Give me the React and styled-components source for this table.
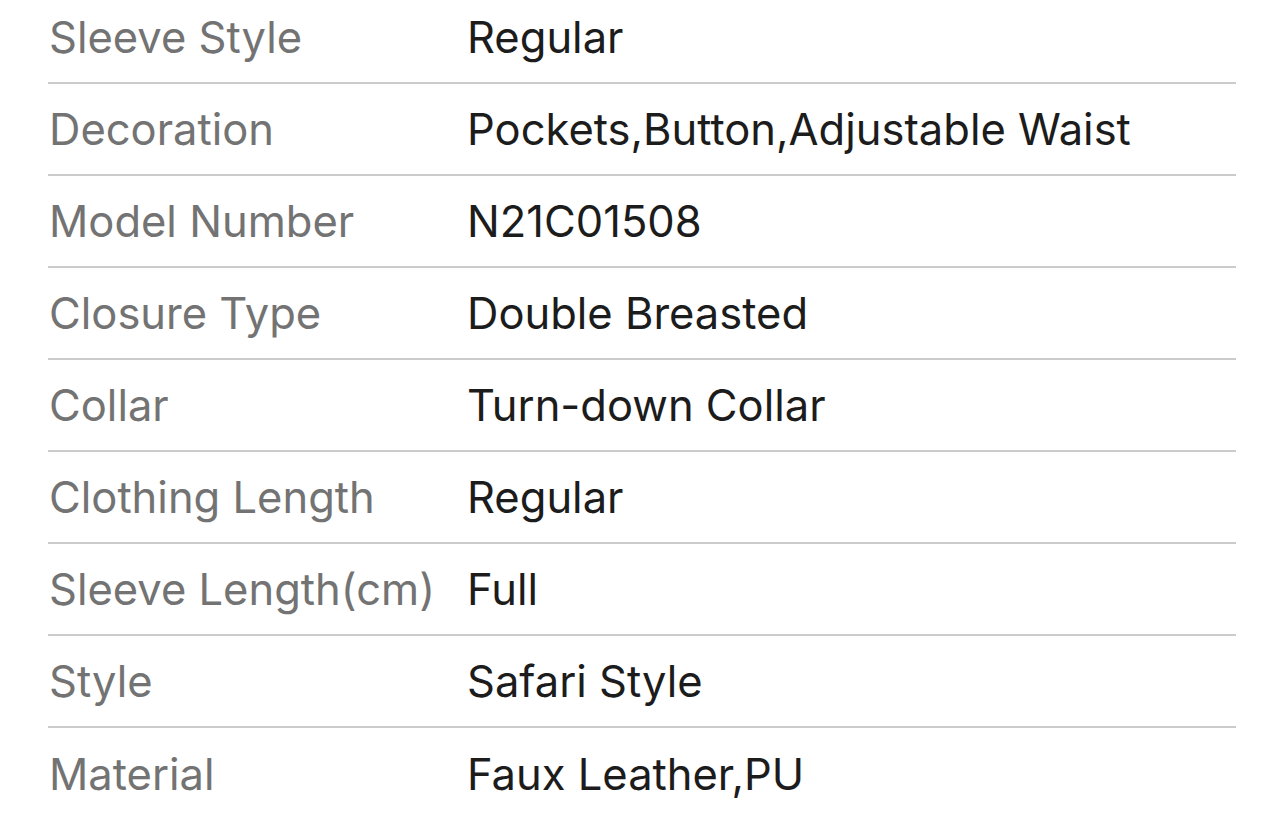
import React from 'react'
import styled, { createGlobalStyle } from 'styled-components'

const GlobalStyle = createGlobalStyle`
  html, body {
    margin: 0;
    padding: 0;
    background: #fff;
    overflow: hidden;
  }
  body {
    font-family: Inter, "Noto Sans", "Liberation Sans", sans-serif;
  }
`

const Table = styled.div`
  margin: -8px 0 0 48px;
  width: 1188px;
`

const Row = styled.div`
  display: grid;
  grid-template-columns: 419px 1fr;
  align-items: center;
  height: 92px;
  box-sizing: border-box;
  border-bottom: ${p => (p.last ? 'none' : '2px solid #cbcbcb')};
  font-size: 43.5px;
`

const Label = styled.div`
  color: #737373;
  padding-left: 1px;
  white-space: nowrap;
`

const Value = styled.div`
  color: #1c1c1c;
  white-space: nowrap;
`

const specs = [
  ['Sleeve Style', 'Regular'],
  ['Decoration', 'Pockets,Button,Adjustable Waist'],
  ['Model Number', 'N21C01508'],
  ['Closure Type', 'Double Breasted'],
  ['Collar', 'Turn-down Collar'],
  ['Clothing Length', 'Regular'],
  ['Sleeve Length(cm)', 'Full'],
  ['Style', 'Safari Style'],
  ['Material', 'Faux Leather,PU'],
]

export default function App() {
  return (
    <>
      <GlobalStyle />
      <Table>
        {specs.map(([k, v], i) => (
          <Row key={k} last={i === specs.length - 1}>
            <Label>{k}</Label>
            <Value>{v}</Value>
          </Row>
        ))}
      </Table>
    </>
  )
}
